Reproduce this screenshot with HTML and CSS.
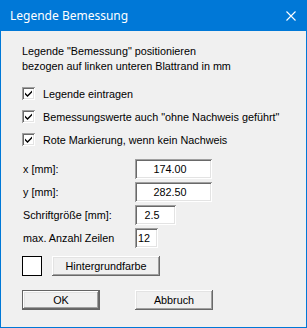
FILE: index.html
```html
<!DOCTYPE html>
<html lang="de">
<head>
  <meta charset="UTF-8" />
  <title>Legende Bemessung</title>
  <link rel="stylesheet" href="styles.css">
</head>
<body>
  <div class="window">
    <div class="titlebar">
      <span class="title">Legende Bemessung</span>
      <svg class="close" width="10" height="10" viewBox="0 0 10 10">
        <path d="M0.5 0.5 L9.5 9.5 M9.5 0.5 L0.5 9.5" stroke="#fff" stroke-width="1.1" fill="none"/>
      </svg>
    </div>

    <div class="content">
      <p class="intro">Legende "Bemessung" positionieren<br>bezogen auf linken unteren Blattrand in mm</p>

      <div class="checks">
        <label class="check"><span class="box"><svg width="9" height="9" viewBox="0 0 9 9"><path d="M1 3.5 L3.5 6 L8 1.5 L8 3.5 L3.5 8 L1 5.5 Z" fill="#000"/></svg></span>Legende eintragen</label>
        <label class="check"><span class="box"><svg width="9" height="9" viewBox="0 0 9 9"><path d="M1 3.5 L3.5 6 L8 1.5 L8 3.5 L3.5 8 L1 5.5 Z" fill="#000"/></svg></span>Bemessungswerte auch "ohne Nachweis geführt"</label>
        <label class="check"><span class="box"><svg width="9" height="9" viewBox="0 0 9 9"><path d="M1 3.5 L3.5 6 L8 1.5 L8 3.5 L3.5 8 L1 5.5 Z" fill="#000"/></svg></span>Rote Markierung, wenn kein Nachweis</label>
      </div>

      <div class="fields">
        <span class="label">x [mm]:</span><span class="field wide">174.00</span>
        <span class="label">y [mm]:</span><span class="field wide">282.50</span>
        <span class="label">Schriftgröße [mm]:</span><span class="field mid">2.5</span>
        <span class="label">max. Anzahl Zeilen</span><span class="field small">12</span>
      </div>

      <div class="color-row">
        <span class="swatch"></span>
        <button class="btn color-btn">Hintergrundfarbe</button>
      </div>

      <div class="actions">
        <button class="btn default">OK</button>
        <button class="btn">Abbruch</button>
      </div>
    </div>
  </div>
</body>
</html>
```

FILE: styles.css
```css
body { margin: 0; font-family: "Liberation Sans", Arial, sans-serif; font-size: 10.8px; color: #000; }

.window {
  width: 307px; height: 328px; box-sizing: border-box;
  border: 1px solid #0078d7; border-top: none;
  background: #f0f0f0;
}

.titlebar {
  height: 31px; margin: 0 -1px; background: #0078d7; color: #fff;
  display: flex; align-items: center; justify-content: space-between;
  padding: 0 11px 0 10px;
}
.title { font-family: "Noto Sans", sans-serif; font-size: 12px; }
.close { display: block; }

.content { padding: 13px 0 0 21px; }

.intro { margin: 0; line-height: 15px; }

.checks { margin-top: 8px; }
.check { height: 23px; display: flex; align-items: center; }
.box {
  width: 13px; height: 13px; box-sizing: border-box; margin-right: 8px;
  background: #fff; display: flex; align-items: center; justify-content: center;
  box-shadow: inset 1px 1px #a0a0a0, inset -1px -1px #fff, inset 2px 2px #696969, inset -2px -2px #e3e3e3;
}
.box svg { display: block; }

.fields {
  margin-top: 8px;
  display: grid; grid-template-columns: 113px auto; row-gap: 3px;
  align-items: center; justify-items: start;
}
.label { padding-left: 1px; }
.field {
  height: 20px; box-sizing: border-box; background: #fff;
  display: flex; align-items: center; padding: 0 3px;
  box-shadow: inset 1px 1px #a0a0a0, inset -1px -1px #fff, inset 2px 2px #696969, inset -2px -2px #e3e3e3;
}
.wide { width: 77px; justify-content: center; padding-right: 10px; }
.mid { width: 41px; justify-content: center; padding-right: 10px; }
.small { width: 23px; }

.color-row { margin-top: 7px; display: flex; align-items: center; gap: 10px; }
.swatch { width: 20px; height: 20px; box-sizing: border-box; border: 1px solid #000; background: #fff; margin-top: 1px; }

.btn {
  font-family: "Liberation Sans", Arial, sans-serif; font-size: 10.8px; color: #000;
  height: 20px; width: 78px; padding: 0; border: none; background: #f0f0f0;
  box-shadow: inset -1px -1px #696969, inset 1px 1px #fff, inset -2px -2px #a0a0a0, inset 2px 2px #e3e3e3;
}
.color-btn { width: 108px; }
.btn.default {
  border: 1px solid #646464;
}

.actions { margin-top: 14px; display: flex; gap: 35px; }
```
